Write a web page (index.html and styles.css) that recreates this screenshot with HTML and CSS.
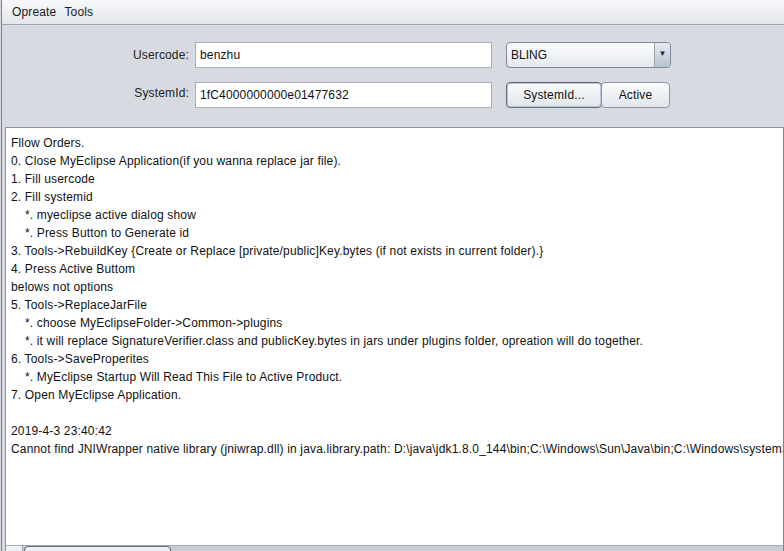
FILE: index.html
```html
<!DOCTYPE html>
<html lang="en">
<head>
    <meta charset="UTF-8">
    <title>MyEclipse Active</title>
    <link rel="stylesheet" href="styles.css">
</head>
<body>
    <div class="frame">
        <div class="menubar">
            <span class="menu">Opreate</span>
            <span class="menu">Tools</span>
        </div>

        <div class="form">
            <label class="label">Usercode:</label>
            <div class="field">benzhu</div>
            <div class="combo">
                <span class="combo-text">BLING</span>
                <span class="combo-arrow">&#9660;</span>
            </div>

            <label class="label label-2">SystemId:</label>
            <div class="field">1fC4000000000e01477632</div>
            <div class="buttons">
                <button class="btn btn-focus">SystemId...</button>
                <button class="btn btn-active">Active</button>
            </div>
        </div>

        <div class="scroll-pane">
            <div class="text-area">Fllow Orders.
0. Close MyEclipse Application(if you wanna replace jar file).
1. Fill usercode
2. Fill systemid
    *. myeclipse active dialog show
    *. Press Button to Generate id
3. Tools-&gt;RebuildKey {Create or Replace [private/public]Key.bytes (if not exists in current folder).}
4. Press Active Buttom
belows not options
5. Tools-&gt;ReplaceJarFile
    *. choose MyEclipseFolder-&gt;Common-&gt;plugins
    *. it will replace SignatureVerifier.class and publicKey.bytes in jars under plugins folder, opreation will do together.
6. Tools-&gt;SaveProperites
    *. MyEclipse Startup Will Read This File to Active Product.
7. Open MyEclipse Application.

2019-4-3 23:40:42
Cannot find JNIWrapper native library (jniwrap.dll) in java.library.path: D:\java\jdk1.8.0_144\bin;C:\Windows\Sun\Java\bin;C:\Windows\system32</div>
            <div class="hscroll">
                <span class="arrow-left"></span>
                <span class="thumb"></span>
            </div>
        </div>
    </div>
</body>
</html>
```

FILE: styles.css
```css
body {
    margin: 0;
    height: 551px;
    background-color: #d7dbe1;
    font-family: "Liberation Sans", Arial, sans-serif;
    font-size: 12px;
    color: #111;
    overflow: hidden;
}
.frame {
    height: 563px;
    border-left: 1px solid #79818d;
    margin-left: 1px;
    display: flex;
    flex-direction: column;
}
.menubar {
    height: 24px;
    background: linear-gradient(#f7f8fa, #e3e6eb);
    border-bottom: 1px solid #9ea5b0;
    display: flex;
    align-items: center;
    padding-left: 10px;
    gap: 8px;
}
.menu {
    color: #1b1b1b;
    letter-spacing: 0.15px;
}
.form {
    display: grid;
    grid-template-columns: 187px 303px 179px;
    grid-auto-rows: 26px;
    row-gap: 14px;
    padding: 17px 0 19px 0;
}
.label {
    text-align: right;
    line-height: 26px;
    color: #222;
    letter-spacing: 0.15px;
}
.label-2 {
    line-height: 22px;
}
.field {
    margin-left: 6px;
    width: 297px;
    box-sizing: border-box;
    background: #fff;
    border: 1px solid #a9b0bb;
    padding-left: 4px;
    line-height: 24px;
    letter-spacing: 0.15px;
}
.combo {
    margin-left: 14px;
    width: 165px;
    box-sizing: border-box;
    border: 1px solid #7f8896;
    border-radius: 4px;
    background: linear-gradient(#fdfdfe, #e4e7ec);
    display: flex;
    overflow: hidden;
}
.combo-text {
    flex: 1;
    padding-left: 4px;
    line-height: 24px;
}
.combo-arrow {
    width: 15px;
    border-left: 1px solid #9aa3b0;
    background: linear-gradient(#e6ebf1, #b8c3d0);
    font-size: 8px;
    text-align: center;
    line-height: 22px;
    color: #1d2b3a;
}
.buttons {
    margin-left: 14px;
    display: flex;
}
.btn {
    height: 26px;
    font-family: "Liberation Sans", Arial, sans-serif;
    font-size: 12px;
    letter-spacing: 0.15px;
    color: #111;
    background: linear-gradient(#fbfcfd, #e1e5ea);
    border: 1px solid #8e96a2;
    border-radius: 4px;
    padding: 0;
    margin: 0;
}
.btn-focus {
    width: 96px;
    border-color: #5f6b7c;
    box-shadow: inset 0 0 0 1px #b6c6da;
}
.btn-active {
    width: 69px;
    margin-left: -1px;
}
.scroll-pane {
    flex: 1;
    margin-left: 3px;
    border: 1px solid #8d949e;
    border-right: 1px solid #7e858f;
    background: #fff;
    display: flex;
    flex-direction: column;
    min-height: 0;
}
.text-area {
    flex: 1;
    white-space: pre;
    overflow: hidden;
    padding: 6px 0 0 5px;
    line-height: 18px;
    letter-spacing: 0.16px;
    color: #111;
}
.hscroll {
    height: 16px;
    flex: none;
    background: #c9ccd2;
    border-top: 1px solid #a5abb4;
    display: flex;
}
.arrow-left {
    width: 16px;
    background: linear-gradient(#f4f5f7, #d7dbe0);
    border-right: 1px solid #9aa1ab;
}
.thumb {
    width: 145px;
    margin-left: 1px;
    border: 1px solid #5e6875;
    border-radius: 4px;
    background: linear-gradient(#f1f5f9, #c6d2df);
}
```
